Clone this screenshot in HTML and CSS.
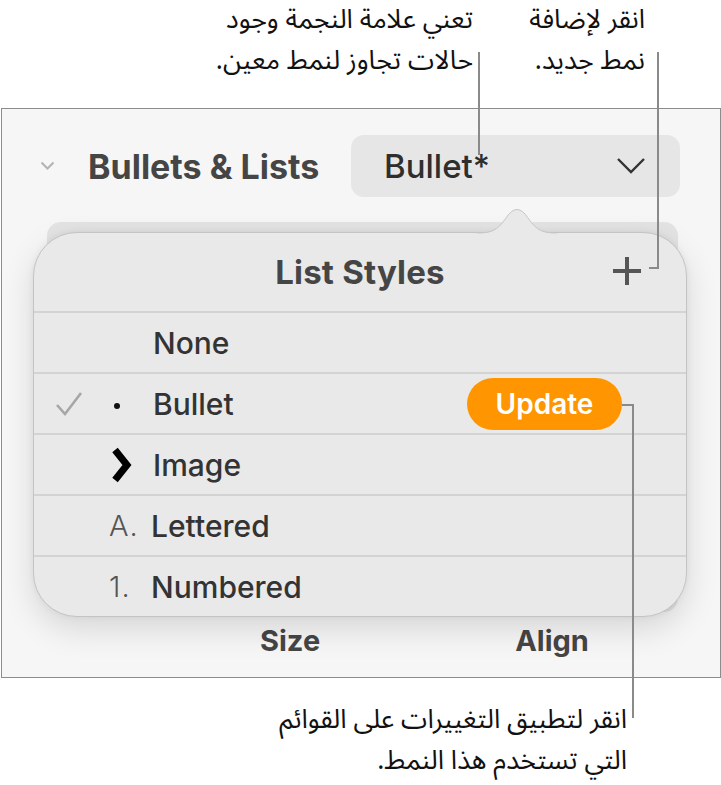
FILE: index.html
```html
<!DOCTYPE html>
<html lang="ar">
<head>
<meta charset="utf-8">
<link rel="stylesheet" href="styles.css">
</head>
<body>
<div class="page">
  <div class="top-callouts">
    <div class="callout c-star" dir="rtl">تعني علامة النجمة وجود<br>حالات تجاوز لنمط معين.</div>
    <div class="callout c-plus" dir="rtl">انقر لإضافة<br>نمط جديد.</div>
  </div>

  <div class="panel" dir="ltr">
    <div class="header">
      <svg class="disclosure" width="15" height="10" viewBox="0 0 15 10"><polyline points="1.5,1.5 7.5,7.5 13.5,1.5" fill="none" stroke="#b3b3b3" stroke-width="2"/></svg>
      <span class="section-title">Bullets &amp; Lists</span>
      <div class="dropdown">
        <span class="dd-value">Bullet*</span>
        <svg width="30" height="18" viewBox="0 0 30 18"><polyline points="2,2 15,15 28,2" fill="none" stroke="#333" stroke-width="2.4"/></svg>
      </div>
    </div>

    <div class="under-bar"></div>

    <div class="labels">
      <span class="lbl-size">Size</span>
      <span class="lbl-align">Align</span>
    </div>

    <div class="popover">
      <svg class="arrow" width="80" height="32" viewBox="0 0 80 32">
        <path d="M0 30 C14 30 20 28 29 15 Q40 -2 51 15 C60 28 66 30 80 30 L80 32 L0 32 Z" fill="#e9e9e9"/>
        <path d="M0 30 C14 30 20 28 29 15 Q40 -2 51 15 C60 28 66 30 80 30" fill="none" stroke="#c6c6c6" stroke-width="1"/>
      </svg>
      <div class="pop-header">
        <span class="pop-title">List Styles</span>
        <svg class="plus" width="32" height="32" viewBox="0 0 32 32"><path d="M16 2 V30 M2 16 H30" stroke="#555" stroke-width="4" fill="none"/></svg>
      </div>
      <div class="row">
        <span class="check"></span><span class="marker"></span><span class="label">None</span>
      </div>
      <div class="row">
        <span class="check"><svg width="28" height="26" viewBox="0 0 28 26"><polyline points="2,14 10,23 26,2" fill="none" stroke="#a6a6a6" stroke-width="2.6"/></svg></span>
        <span class="marker"><span class="dot"></span></span>
        <span class="label">Bullet</span>
        <span class="update">Update</span>
      </div>
      <div class="row">
        <span class="check"></span>
        <span class="marker"><svg width="22" height="36" viewBox="0 0 22 36"><polyline points="4,3 16,18 4,33" fill="none" stroke="#000" stroke-width="7"/></svg></span>
        <span class="label">Image</span>
      </div>
      <div class="row">
        <span class="check"></span><span class="marker num">A.</span><span class="label">Lettered</span>
      </div>
      <div class="row">
        <span class="check"></span><span class="marker num">1.</span><span class="label">Numbered</span>
      </div>
    </div>
  </div>

  <div class="bottom-callout">
    <div class="callout c-update" dir="rtl">انقر لتطبيق التغييرات على القوائم<br>التي تستخدم هذا النمط.</div>
  </div>

  <svg class="leaders" width="721" height="785" viewBox="0 0 721 785">
    <path d="M479 52 V155" />
    <path d="M658 52 V268 H649" />
    <path d="M622 405 H633 V718" />
  </svg>
</div>
</body>
</html>
```

FILE: styles.css
```css
html, body {
  margin: 0;
  padding: 0;
  background: #ffffff;
}

.page {
  position: relative;
  width: 721px;
  height: 785px;
  overflow: hidden;
  font-family: "Inter", "Roboto", "Liberation Sans", sans-serif;
  color: #3d3d3d;
}

.callout {
  font-family: "Noto Sans Arabic", "DejaVu Sans", sans-serif;
  font-size: 26.5px;
  line-height: 41px;
  color: #111;
  text-align: right;
  white-space: nowrap;
}

.top-callouts {
  height: 108px;
  display: flex;
  justify-content: flex-end;
  gap: 60px;
  padding-right: 76px;
  box-sizing: border-box;
}

.c-plus {
  width: 112px;
}

.panel {
  position: relative;
  margin-left: 1px;
  width: 720px;
  height: 570px;
  border: 1.5px solid #8c8c8c;
  box-sizing: border-box;
  background: #f6f6f6;
}

.header {
  display: flex;
  align-items: center;
  height: 62px;
  margin-top: 26px;
}

.disclosure {
  margin-left: 38px;
  margin-right: 33px;
}

.section-title {
  font-size: 34px;
  font-weight: 700;
  color: #454545;
  letter-spacing: 0;
}

.dropdown {
  margin-left: auto;
  margin-right: 40px;
  width: 329px;
  height: 62px;
  background: #e6e6e6;
  border-radius: 13px;
  display: flex;
  align-items: center;
  justify-content: space-between;
  padding: 0 34px 0 33px;
  box-sizing: border-box;
}

.dd-value {
  font-size: 33px;
  font-weight: 500;
  color: #2e2e2e;
}

.under-bar {
  margin: 25px 0 0 45px;
  width: 631px;
  height: 390px;
  background: #e3e3e3;
  border-radius: 14px;
}

.labels {
  position: relative;
  height: 56px;
  font-size: 29px;
  font-weight: 700;
  color: #454545;
  display: flex;
  align-items: center;
}

.lbl-size { margin-left: 258px; }
.lbl-align { margin-left: 195px; }

.popover {
  position: absolute;
  left: 31px;
  top: 123px;
  width: 654px;
  height: 385px;
  background: #e9e9e9;
  border: 1px solid #c4c4c4;
  border-radius: 44px;
  box-sizing: border-box;
  box-shadow: 0 12px 32px rgba(0, 0, 0, 0.13), 0 0 6px rgba(0, 0, 0, 0.06);
}

.arrow {
  position: absolute;
  left: 443px;
  top: -30px;
}

.pop-header {
  position: relative;
  height: 78px;
  display: flex;
  align-items: center;
  justify-content: center;
}

.pop-title {
  font-size: 33px;
  font-weight: 700;
  color: #454545;
  letter-spacing: 0.2px;
}

.plus {
  position: absolute;
  right: 43px;
  top: 22px;
}

.row {
  height: 59px;
  border-top: 2px solid #d3d3d3;
  display: flex;
  align-items: center;
  padding-left: 21px;
  padding-right: 64px;
}

.check {
  width: 56px;
  flex-shrink: 0;
  display: flex;
  align-items: center;
}

.marker {
  width: 42px;
  min-width: 0;
  flex-shrink: 0;
  display: flex;
  align-items: center;
  overflow: visible;
  white-space: nowrap;
}

.dot {
  width: 6px;
  height: 6px;
  border-radius: 50%;
  background: #111;
  margin-left: 3px;
  margin-top: 4px;
}

.num {
  font-size: 29px;
  font-weight: 300;
  color: #555;
  margin-left: -2px;
  letter-spacing: 1px;
}

.label {
  font-size: 30px;
  font-weight: 500;
  color: #333;
  flex: 1;
}

.update {
  background: #ff9500;
  color: #fff;
  font-size: 28px;
  font-weight: 600;
  height: 52px;
  width: 155px;
  border-radius: 26px;
  display: flex;
  align-items: center;
  justify-content: center;
}

.bottom-callout {
  display: flex;
  justify-content: flex-end;
  padding-right: 94px;
  margin-top: 22px;
}

.leaders {
  position: absolute;
  left: 0;
  top: 0;
  pointer-events: none;
}

.leaders path {
  fill: none;
  stroke: #8a8a8a;
  stroke-width: 2;
}
```
